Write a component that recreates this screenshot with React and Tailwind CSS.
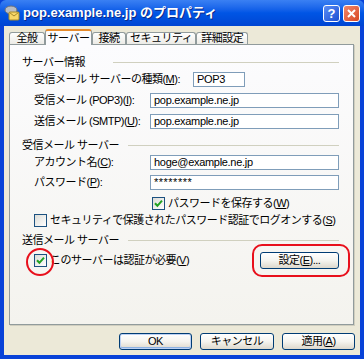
import clsx from 'clsx'

const font = "font-['Liberation_Sans','Noto_Sans_CJK_JP',sans-serif] font-features-['palt'] whitespace-nowrap"
const txt = 'text-[11px] tracking-[-0.5px] text-black'

function Mn({ children }) {
  return <span className="underline underline-offset-[1px]">{children}</span>
}

function Check({ checked }) {
  return (
    <span className="flex h-[13px] w-[13px] shrink-0 items-center justify-center border border-[#1C5180] bg-linear-to-br from-[#DCDCD7] to-white">
      {checked && (
        <svg width="9" height="9" viewBox="0 0 9 9">
          <path d="M1 4.2 L3.4 6.8 L8 1.6" stroke="#21A121" strokeWidth="2" fill="none" />
        </svg>
      )}
    </span>
  )
}

function Field({ value, className }) {
  return (
    <div
      className={clsx(
        "flex h-[15px] items-center border border-[#7F9DB9] bg-white pl-[3px] text-[11px] text-black font-['Liberation_Sans',sans-serif] tracking-[-0.3px]",
        className
      )}
    >
      {value}
    </div>
  )
}

function XpButton({ children, className, isDefault }) {
  return (
    <div
      className={clsx(
        'flex h-[17px] items-center justify-center rounded-[3px] border border-[#003C74] bg-linear-to-b from-white via-[#F5F4EF] to-[#DDD8CC] leading-none',
        txt,
        isDefault && 'shadow-[inset_0_0_0_1px_#BCD1F3,inset_0_-1px_0_1px_#8DB2E3]',
        className
      )}
    >
      {children}
    </div>
  )
}

function GroupTitle({ label, width }) {
  return (
    <div className="flex h-[16px] items-center">
      <span className={clsx('shrink-0', txt, width)}>{label}</span>
      <span className="h-px flex-1 bg-[#D0D0BF]" />
    </div>
  )
}

function Row({ label, children }) {
  return (
    <div className="flex h-[15px] items-center pl-[12px]">
      <span className={clsx('w-[116px] shrink-0', txt)}>{label}</span>
      {children}
    </div>
  )
}

function Tab({ label, selected, width }) {
  return (
    <div
      className={clsx(
        'flex shrink-0 items-center justify-center rounded-t-[3px] border border-[#919B9C] leading-none',
        txt,
        width,
        selected
          ? 'z-10 -mb-px h-[16px] border-b-0 border-t-2 border-t-[#E68B2C] bg-[#FCFCFE]'
          : 'mt-[3px] h-[12px] border-b-0 bg-linear-to-b from-white to-[#ECEBE6]'
      )}
    >
      {label}
    </div>
  )
}

export default function App() {
  return (
    <div className={clsx('flex h-[359px] w-[364px] flex-col overflow-hidden bg-[#0842D8]', font)}>
      {/* title bar */}
      <div className="flex h-[26px] shrink-0 items-center rounded-t-[6px] bg-linear-to-b from-[#3A80F3] via-[#0055E5] to-[#0045D2] pl-[4px] pr-[4px]">
        <svg width="16" height="16" viewBox="0 0 16 16" className="shrink-0">
          <ellipse cx="7" cy="5" rx="6" ry="4" fill="#B9BDC4" stroke="#6B7079" />
          <rect x="5" y="7" width="10" height="8" rx="1" fill="#F7D768" stroke="#A68A2A" />
          <path d="M5.5 7.5 L10 11 L14.5 7.5" stroke="#A68A2A" fill="none" />
        </svg>
        <span className="ml-[3px] text-[13px] font-bold text-white [text-shadow:1px_1px_0_#0A2A8A]">
          pop.example.ne.jp のプロパティ
        </span>
        <div className="ml-auto flex items-center gap-[3px]">
          <div className="flex h-[17px] w-[17px] items-center justify-center rounded-[3px] border border-white bg-linear-to-br from-[#5C8DF5] to-[#1C4ED2] text-[13px] font-bold leading-none text-white">
            ?
          </div>
          <div className="flex h-[17px] w-[17px] items-center justify-center rounded-[3px] border border-white bg-linear-to-br from-[#F0866A] to-[#D8461F]">
            <svg width="9" height="9" viewBox="0 0 9 9">
              <path d="M1 1 L8 8 M8 1 L1 8" stroke="white" strokeWidth="2" />
            </svg>
          </div>
        </div>
      </div>

      {/* body */}
      <div className="mx-[4px] mb-[4px] flex flex-1 flex-col bg-[#ECE9D8] pt-[3px]">
        <div className="flex items-end pl-[5px]">
          <Tab label="全般" width="w-[36px]" />
          <Tab label="サーバー" width="w-[47px]" selected />
          <Tab label="接続" width="w-[34px]" />
          <Tab label="セキュリティ" width="px-[3px]" />
          <Tab label="詳細設定" width="w-[52px]" />
        </div>

        <div className="relative ml-[5px] mr-[6px] flex h-[281px] flex-col border border-[#919B9C] bg-linear-to-b from-[#FCFCFE] to-[#F4F3EE] pl-[12px] pr-[14px] pt-[9px] shadow-[1px_1px_0_#D0CEBF]">
          <GroupTitle label="サーバー情報" width="w-[91px]" />
          <div className="mt-[2px] flex h-[15px] items-center pl-[12px]">
            <span className={clsx('w-[159px] shrink-0', txt)}>
              受信メール サーバーの種類(<Mn>M</Mn>):
            </span>
            <Field value="POP3" className="w-[52px]" />
          </div>
          <div className="mt-[6px]">
            <Row
              label={
                <>
                  受信メール (POP3)(<Mn>I</Mn>):
                </>
              }
            >
              <Field value="pop.example.ne.jp" className="flex-1" />
            </Row>
          </div>
          <div className="mt-[6px]">
            <Row
              label={
                <>
                  送信メール (SMTP)(<Mn>U</Mn>):
                </>
              }
            >
              <Field value="pop.example.ne.jp" className="flex-1" />
            </Row>
          </div>

          <div className="mt-[8px]">
            <GroupTitle label="受信メール サーバー" width="w-[106px]" />
          </div>
          <div className="mt-[2px]">
            <Row
              label={
                <>
                  アカウント名(<Mn>C</Mn>):
                </>
              }
            >
              <Field value="hoge@example.ne.jp" className="flex-1" />
            </Row>
          </div>
          <div className="mt-[5px]">
            <Row
              label={
                <>
                  パスワード(<Mn>P</Mn>):
                </>
              }
            >
              <Field value="********" className="flex-1 tracking-[0.5px]" />
            </Row>
          </div>
          <div className={clsx('mt-[7px] flex h-[13px] items-center gap-[3px] pl-[130px]', txt)}>
            <Check checked />
            <span>
              パスワードを保存する(<Mn>W</Mn>)
            </span>
          </div>
          <div className={clsx('mt-[4px] flex h-[13px] items-center gap-[3px] pl-[12px]', txt)}>
            <Check />
            <span>
              セキュリティで保護されたパスワード認証でログオンする(<Mn>S</Mn>)
            </span>
          </div>

          <div className="mt-[5px]">
            <GroupTitle label="送信メール サーバー" width="w-[106px]" />
          </div>
          <div className={clsx('mt-[4px] flex h-[17px] items-center pl-[12px]', txt)}>
            <Check checked />
            <span className="ml-[3px]">
              このサーバーは認証が必要(<Mn>V</Mn>)
            </span>
            <XpButton className="ml-auto w-[79px]">
              設定(<Mn>E</Mn>)...
            </XpButton>
          </div>

          {/* annotations */}
          <div className="absolute left-[16px] top-[203px] h-[28px] w-[28px] rounded-full border-2 border-[#E8101C]" />
          <div className="absolute left-[242px] top-[199px] h-[33px] w-[98px] rounded-[10px] border-2 border-[#E8101C]" />
        </div>

        <div className="mt-[8px] flex justify-end gap-[8px] pr-[5px]">
          <XpButton className="w-[73px]" isDefault>
            OK
          </XpButton>
          <XpButton className="w-[74px]">キャンセル</XpButton>
          <XpButton className="w-[73px]">
            適用(<Mn>A</Mn>)
          </XpButton>
        </div>
      </div>
    </div>
  )
}
